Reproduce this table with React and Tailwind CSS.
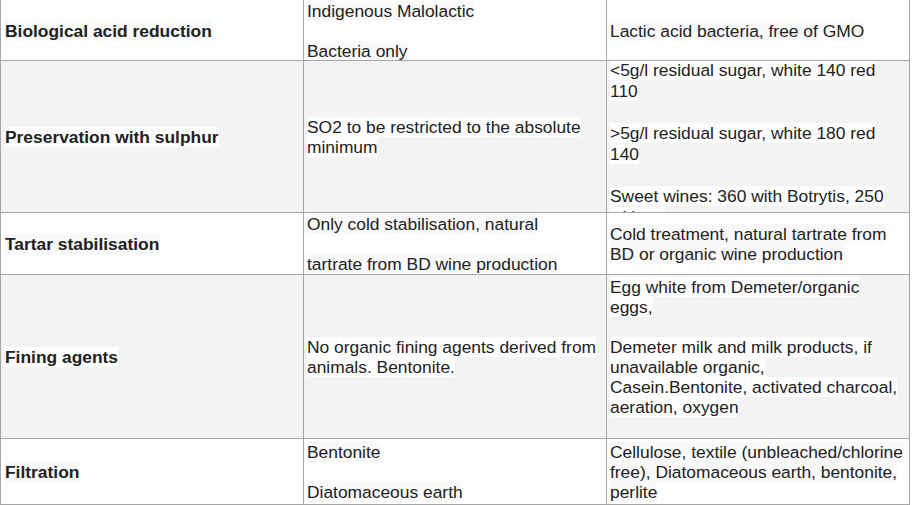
import React from 'react';

const rows = [
  {
    h: 'h-[61px]',
    shaded: false,
    label: 'Biological acid reduction',
    mid: ['Indigenous Malolactic', '', 'Bacteria only'],
    right: ['Lactic acid bacteria, free of GMO'],
  },
  {
    h: 'h-[152px]',
    shaded: true,
    label: 'Preservation with sulphur',
    mid: ['SO2 to be restricted to the absolute', 'minimum'],
    right: [
      '<5g/l residual sugar, white 140 red',
      '110',
      '',
      '>5g/l residual sugar, white 180 red',
      '140',
      '',
      'Sweet wines: 360 with Botrytis, 250',
      'without',
    ],
    rightTop: true,
  },
  {
    h: 'h-[62px]',
    shaded: false,
    label: 'Tartar stabilisation',
    mid: ['Only cold stabilisation, natural', '', 'tartrate from BD wine production'],
    right: ['Cold treatment, natural tartrate from', 'BD or organic wine production'],
  },
  {
    h: 'h-[164px]',
    shaded: true,
    label: 'Fining agents',
    mid: ['No organic fining agents derived from', 'animals. Bentonite.'],
    right: [
      'Egg white from Demeter/organic',
      'eggs,',
      '',
      'Demeter milk and milk products, if',
      'unavailable organic,',
      'Casein.Bentonite, activated charcoal,',
      'aeration, oxygen',
      '',
    ],
  },
  {
    h: 'h-[66px]',
    shaded: false,
    label: 'Filtration',
    mid: ['Bentonite', '', 'Diatomaceous earth'],
    right: [
      'Cellulose, textile (unbleached/chlorine',
      'free), Diatomaceous earth, bentonite,',
      'perlite',
    ],
  },
];

function Lines({ lines, shaded, leading }) {
  const hl = shaded ? 'bg-[#fdfdfd]' : 'bg-[#f9f9f9]';
  return (
    <div className={`flex flex-col ${leading}`}>
      {lines.map((t, i) => (
        <div key={i} className="whitespace-nowrap h-[1lh]">
          {t ? <span className={hl}>{t}</span> : null}
        </div>
      ))}
    </div>
  );
}

export default function App() {
  return (
    <div className="w-[912px] h-[505px] bg-white overflow-hidden text-[#222] text-[17.4px] font-['Liberation_Sans',Arial,sans-serif]">
      <div className="w-[910px] border-l border-r border-[#a6a6a6]">
        {rows.map((r, i) => (
          <div
            key={i}
            className={`grid grid-cols-[303px_303px_302px] border-b border-[#a6a6a6] overflow-hidden ${r.h} ${r.shaded ? 'bg-[#f3f3f3]' : 'bg-white'}`}
          >
            <div className="flex items-center pl-[4px] pt-[1px] border-r border-[#a6a6a6] font-bold leading-[20px]">
              <span className={r.shaded ? 'bg-[#fdfdfd]' : 'bg-[#f9f9f9]'}>{r.label}</span>
            </div>
            <div className="flex items-center pl-[3px] pt-[1px] border-r border-[#a6a6a6] overflow-hidden">
              <Lines lines={r.mid} shaded={r.shaded} leading="leading-[20px]" />
            </div>
            <div className={`flex pl-[3px] overflow-hidden ${r.rightTop ? 'items-start -mt-[1px]' : 'items-center pt-[1px]'}`}>
              <Lines lines={r.right} shaded={r.shaded} leading={r.rightTop ? 'leading-[21px]' : 'leading-[20px]'} />
            </div>
          </div>
        ))}
      </div>
    </div>
  );
}
